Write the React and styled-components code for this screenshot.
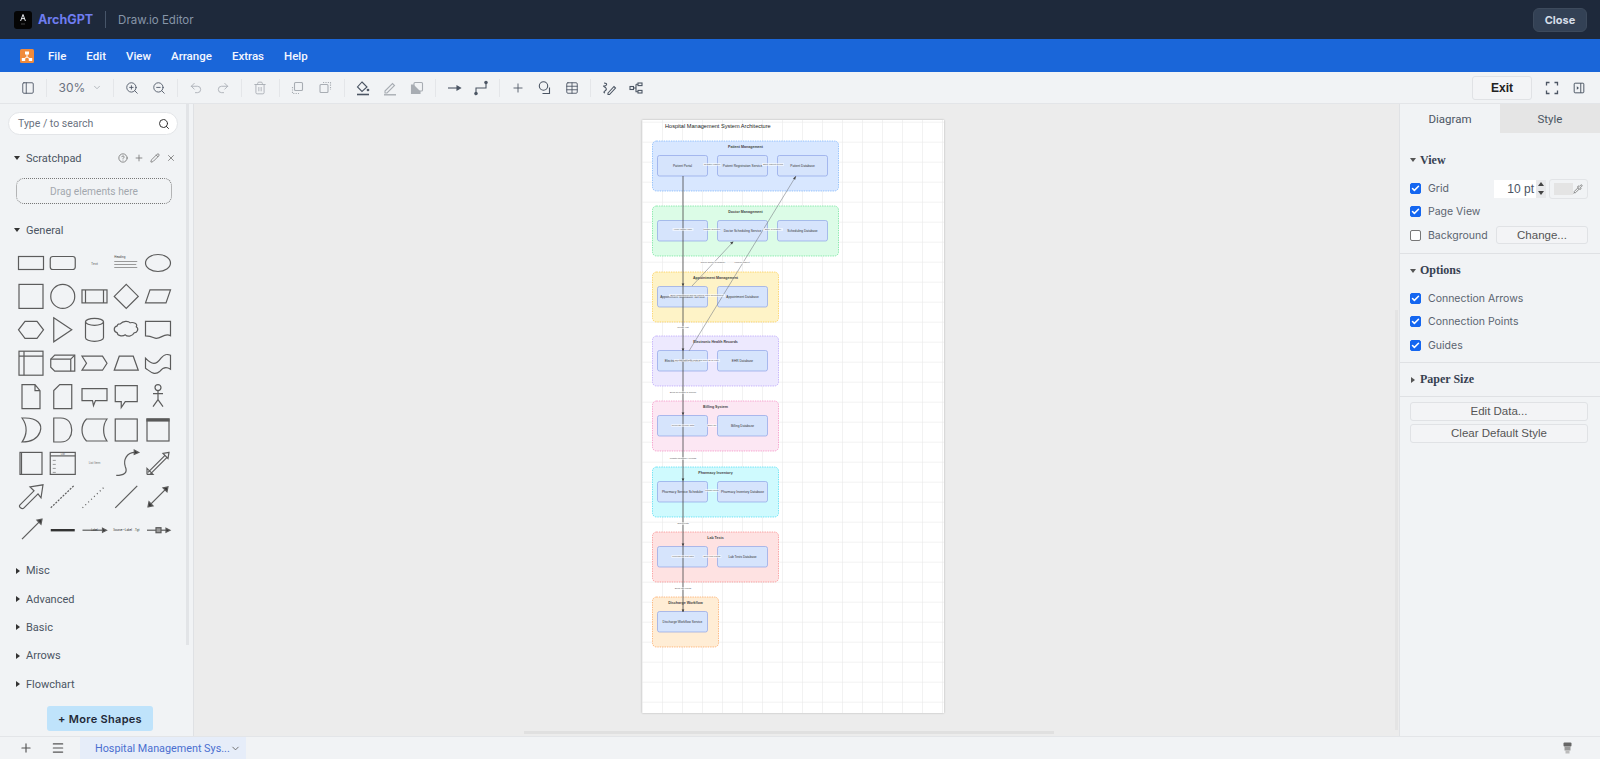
import React from "react";
import styled, { createGlobalStyle } from "styled-components";
import {
  PanelLeft, ChevronDown, ZoomIn, ZoomOut, Undo2, Redo2, Trash2, Plus, Table, Search,
  CircleHelp, Pencil, X, Menu, Check, Pipette,
} from "lucide-react";

const GlobalStyle = createGlobalStyle`
  html, body { margin: 0; padding: 0; height: 100%; overflow: hidden; }
  body { font-family: Roboto, "Liberation Sans", sans-serif; color: #374151; }
`;

const Page = styled.div`
  width: 1600px;
  height: 759px;
  display: flex;
  flex-direction: column;
  background: #f1f3f5;
`;

const Header = styled.header`
  height: 39px;
  flex: none;
  display: flex;
  align-items: center;
  padding: 0 14px;
  background: #1e293b;
`;

const Logo = styled.div`
  width: 18px;
  height: 18px;
  border-radius: 3px;
  background: #050505;
  display: flex;
  align-items: center;
  justify-content: center;
  margin-right: 6px;
`;

const Brand = styled.span`
  font: 700 12.5px Inter, sans-serif;
  color: #6f7df0;
`;

const HeaderDivider = styled.span`
  width: 1px;
  height: 17px;
  background: #475569;
  margin: 0 12px;
`;

const HeaderTitle = styled.span`
  font: 11.5px Inter, sans-serif;
  color: #8795a8;
  flex: 1;
`;

const CloseButton = styled.button`
  width: 54px;
  height: 24px;
  margin-right: -1px;
  border: 1px solid #3d4a5c;
  border-radius: 6px;
  background: #334155;
  color: #d5dde8;
  font: 700 11px Inter, sans-serif;
`;

const MenuBar = styled.nav`
  height: 33px;
  flex: none;
  display: flex;
  align-items: center;
  padding: 0 20px;
  background: #1a66d9;
`;

const MenuItem = styled.span`
  font-size: 11.5px;
  font-weight: 500;
  color: #f4f7ff;
  margin-left: ${(p) => p.$gap}px;
`;

const Toolbar = styled.div`
  height: 32px;
  flex: none;
  box-sizing: border-box;
  display: flex;
  align-items: center;
  background: #f1f3f5;
  border-bottom: 1px solid #e3e5e8;
`;

const ToolSlot = styled.span`
  width: ${(p) => p.$w || 27}px;
  height: 20px;
  flex: none;
  display: flex;
  align-items: center;
  justify-content: center;
  color: ${(p) => (p.$off ? "#a8adb3" : "#4b5563")};
`;

const ToolSep = styled.span`
  width: 1px;
  height: 18px;
  flex: none;
  margin: 0 ${(p) => p.$m || 4.5}px 0 ${(p) => p.$l || p.$m || 4.5}px;
  background: #e4e6e9;
`;

const ZoomValue = styled.span`
  font: 12px Inter, sans-serif;
  color: #6b7280;
  width: 40px;
  text-align: center;
`;

const ExitButton = styled.button`
  width: 60px;
  height: 24px;
  margin-left: auto;
  border: 1px solid #e0e2e5;
  border-radius: 3px;
  background: #f3f4f6;
  color: #222;
  font: 700 12px "Liberation Sans", sans-serif;
`;

const Body = styled.div`
  flex: 1;
  min-height: 0;
  display: flex;
`;

const Sidebar = styled.aside`
  width: 194px;
  flex: none;
  position: relative;
  box-sizing: border-box;
  padding: 8px 0 0 8px;
  background: #f1f3f5;
  border-right: 1px solid #dfe1e4;
`;

const ScrollThumb = styled.div`
  position: absolute;
  top: 0;
  right: 4px;
  width: 3px;
  height: 541px;
  background: #e2e4e7;
`;

const SearchBox = styled.div`
  width: 170px;
  height: 23px;
  box-sizing: border-box;
  padding: 0 7px 0 9px;
  display: flex;
  align-items: center;
  justify-content: space-between;
  border: 1px solid #e3e5e8;
  border-radius: 12px;
  background: #fff;
  font-size: 10.5px;
  color: #6b7280;
`;

const SectionRow = styled.div`
  height: ${(p) => p.$h || 28.4}px;
  margin-top: ${(p) => p.$top || 0}px;
  display: flex;
  align-items: center;
  font-size: 11px;
  color: #4b5563;
`;

const Caret = styled.i`
  width: 0;
  height: 0;
  flex: none;
  margin: 0 6px 0 ${(p) => (p.$open ? 6 : 8)}px;
  ${(p) =>
    p.$open
      ? "border-left: 3px solid transparent; border-right: 3px solid transparent; border-top: 4px solid #333;"
      : "border-top: 3px solid transparent; border-bottom: 3px solid transparent; border-left: 4px solid #333;"}
`;

const PadTools = styled.div`
  margin-left: auto;
  margin-right: 17px;
  display: flex;
  gap: 6px;
  color: #777;
`;

const DropZone = styled.div`
  width: 156px;
  height: 26px;
  margin: 9px 0 15px 8px;
  box-sizing: border-box;
  display: flex;
  align-items: center;
  justify-content: center;
  border: 1.5px dotted #777;
  border-radius: 8px;
  font-size: 10.2px;
  color: #a3a8ae;
`;

const ShapeGrid = styled.div`
  width: 160px;
  height: 300px;
  margin: 6px 0 9.5px 8px;
`;

const MoreShapes = styled.button`
  position: absolute;
  left: 47px;
  top: 602px;
  width: 106px;
  height: 25px;
  border: 0;
  border-radius: 3px;
  background: #bfe3fb;
  color: #1f2937;
  font: 600 11px Inter, sans-serif;
  letter-spacing: 0.3px;
`;

const Canvas = styled.main`
  flex: 1;
  position: relative;
  background: #ececec;
  overflow: hidden;
`;

const CanvasScrollX = styled.div`
  position: absolute;
  left: 330px;
  bottom: 2px;
  width: 530px;
  height: 3px;
  background: #e0e0e0;
`;

const CanvasScrollY = styled.div`
  position: absolute;
  right: 1px;
  top: 206px;
  width: 3px;
  height: 420px;
  background: #e4e4e4;
`;

const DiagramPage = styled.svg`
  position: absolute;
  left: 448px;
  top: 16px;
  background: #fff;
  box-shadow: 0 0 2px rgba(0, 0, 0, 0.25);
`;

const RightPanel = styled.aside`
  width: 201px;
  flex: none;
  background: #f1f3f5;
  border-left: 1px solid #e0e2e5;
  box-sizing: border-box;
`;

const Tabs = styled.div`
  height: 29px;
  display: flex;
`;

const Tab = styled.div`
  flex: 1;
  display: flex;
  align-items: center;
  justify-content: center;
  font-size: 11.5px;
  color: #4b5563;
  background: ${(p) => (p.$active ? "#f1f3f5" : "#e5e5e5")};
`;

const PanelSection = styled.section`
  padding: ${(p) => p.$pad};
  border-bottom: ${(p) => (p.$line ? "1px solid #dfe1e4" : "0")};
`;

const PanelHead = styled.div`
  height: 20px;
  margin-bottom: ${(p) => p.$after || 0}px;
  display: flex;
  align-items: center;
  gap: 3px;
  font-family: "Liberation Serif", serif;
  font-size: 12px;
  font-weight: 700;
  color: #374151;
`;

const HeadCaret = styled.i`
  width: 0;
  height: 0;
  ${(p) =>
    p.$open
      ? "border-left: 3px solid transparent; border-right: 3px solid transparent; border-top: 4px solid #555; margin-right: 1px;"
      : "border-top: 3px solid transparent; border-bottom: 3px solid transparent; border-left: 4px solid #555; margin: 0 2px 0 1px;"}
`;

const CheckRow = styled.div`
  height: 23.3px;
  display: flex;
  align-items: center;
  font: 10.5px Inter, sans-serif;
  color: #5b6470;
`;

const Box = styled.span`
  width: 11px;
  height: 11px;
  flex: none;
  margin-right: 7px;
  box-sizing: border-box;
  border-radius: 2px;
  display: flex;
  align-items: center;
  justify-content: center;
  color: #fff;
  background: ${(p) => (p.$on ? "#1466f0" : "#fff")};
  border: 1px solid ${(p) => (p.$on ? "#1466f0" : "#777")};
`;

const RowRight = styled.div`
  margin-left: auto;
  display: flex;
  align-items: center;
`;

const PtInput = styled.span`
  width: 42px;
  height: 18px;
  box-sizing: border-box;
  padding-right: 2px;
  text-align: right;
  line-height: 18px;
  background: #fff;
  font: 12px/18px "Liberation Sans", sans-serif;
  color: #4b5563;
`;

const Spinner = styled.span`
  width: 10px;
  height: 18px;
  margin-right: 3px;
  display: flex;
  flex-direction: column;
  align-items: center;
  justify-content: space-around;
  background: #e8e9eb;
  &::before {
    content: "";
    border-left: 3px solid transparent;
    border-right: 3px solid transparent;
    border-bottom: 4px solid #444;
  }
  &::after {
    content: "";
    border-left: 3px solid transparent;
    border-right: 3px solid transparent;
    border-top: 4px solid #444;
  }
`;

const ColorButton = styled.span`
  width: 39px;
  height: 20px;
  box-sizing: border-box;
  padding: 0 4px;
  display: flex;
  align-items: center;
  justify-content: space-between;
  border: 1px solid #e2e4e7;
  border-radius: 3px;
  color: #777;
  &::before {
    content: "";
    width: 19px;
    height: 12px;
    background: #e4e4e4;
  }
`;

const PanelButton = styled.button`
  display: block;
  width: ${(p) => p.$w || 178}px;
  height: ${(p) => p.$h || 19}px;
  padding: 0;
  margin: ${(p) => p.$m || "0"};
  border: 1px solid #e0e2e5;
  border-radius: 3px;
  background: #f3f4f6;
  font: 11.5px "Liberation Sans", sans-serif;
  color: #555;
`;

const Footer = styled.footer`
  height: 23px;
  flex: none;
  display: flex;
  align-items: center;
  background: #f1f3f5;
  border-top: 1px solid #e3e5e8;
  box-sizing: border-box;
`;

const FooterIcon = styled.span`
  width: 32px;
  margin-left: ${(p) => p.$left || 0}px;
  display: flex;
  justify-content: center;
  color: #555;
`;

const SheetTab = styled.div`
  width: 166px;
  height: 100%;
  margin-left: 6px;
  box-sizing: border-box;
  padding: 0 8px 0 15px;
  display: flex;
  align-items: center;
  justify-content: space-between;
  white-space: nowrap;
  background: #e6edf9;
  color: #4a6fd0;
  font-size: 10.8px;
  & > svg {
    flex: none;
  }
`;

const Robot = styled.svg`
  margin-left: auto;
  margin-right: 27px;
`;

const stroke = { fill: "none", stroke: "#5c5c5c", strokeWidth: 1.2 };

// sidebar stencil, one entry per cell, drawn around the cell centre
const stencils = [
  <rect x="-12.5" y="-6.5" width="25" height="13" />,
  <rect x="-12.5" y="-6.5" width="25" height="13" rx="2.5" />,
  <text x="0" y="2" fontSize="3.6" textAnchor="middle" fill="#666" stroke="none">Text</text>,
  <g stroke="none" fill="#999"><text x="-12" y="-5" fontSize="3" fill="#444">Heading</text><rect x="-12" y="-2" width="23" height="1" /><rect x="-12" y="1" width="22" height="1" /><rect x="-12" y="4" width="23" height="1" /></g>,
  <ellipse cx="0" cy="0" rx="12.5" ry="8.5" />,
  <rect x="-12" y="-12" width="24" height="24" />,
  <circle cx="0" cy="0" r="12" />,
  <g><rect x="-12.5" y="-6.5" width="25" height="13" /><path d="M-9-6.5v13M9-6.5v13" /></g>,
  <path d="M0-12 12 0 0 12-12 0Z" />,
  <path d="M-8-6.5H12.5L8 6.5H-12.5Z" />,
  <path d="M-6-8.5H6L12.5 0 6 8.5H-6L-12.5 0Z" />,
  <path d="M-9-12 9 0-9 12Z" />,
  <g><ellipse cx="0" cy="-8" rx="9" ry="3.5" /><path d="M-9-8V8A9 3.5 0 0 0 9 8V-8" /></g>,
  <path d="M-6-6C-3-9 2-9 4-7 7-8 12-6 10-3 13-1 11 3 8 3 6 7 1 7-1 5-4 7-9 6-9 3-13 2-13-3-9-4-9-6-7-6-6-6Z" />,
  <path d="M-12.5-8.5H12.5V6C6 2 2 11-4 8-7 6.5-10 6-12.5 6Z" />,
  <g><rect x="-12" y="-12" width="24" height="24" /><path d="M-7-12V12M-12-7H12" /></g>,
  <g><path d="M-12-4-8-8H12V8H-8L-12 4Z" /><path d="M-12-4H8V8M8-4 12-8" /></g>,
  <path d="M-12.5-7H8L12.5 0 8 7H-12.5L-8 0Z" />,
  <path d="M-7-7H7L12 7H-12Z" />,
  <path d="M-12.5-5C-6 2-2 2 3-5 7-10 10-9 12.5-8V6C8 3 5 4 2 8-4 13-8 8-12.5 5Z" />,
  <path d="M-9-12H4L9-6V12H-9ZM4-12V-6H9" />,
  <path d="M-3-12H9V12H-9V-6Z" />,
  <path d="M-12.5-8H12.5V4H1L-1 9-2 4H-12.5Z" />,
  <path d="M-11-11H11V5H-1L-5 11V5H-11Z" />,
  <g><circle cx="0" cy="-9" r="3" /><path d="M0-6V3M-5-3H5M0 3-5 10M0 3 5 10" /></g>,
  <path d="M-9-12H-6C6-12 12-6 9 2 6 10-2 12-9 12-4 5-3-4-9-12Z" />,
  <path d="M-9-12H-2C6-12 9-6 9 0 9 6 6 12-2 12H-9Z" />,
  <path d="M-8-11H12.5C8-5 8 5 12.5 11H-8C-14 5-14-5-8-11Z" />,
  <rect x="-11" y="-11" width="22" height="22" />,
  <g><rect x="-11" y="-11" width="22" height="22" /><rect x="-11" y="-11" width="22" height="2" fill="#555" /></g>,
  <g><rect x="-11" y="-11" width="22" height="22" /><path d="M-9.5-11V11" /></g>,
  <g><rect x="-12.5" y="-11" width="25" height="22" /><path d="M-12.5-7.5H12.5" /><path d="M-10-3H-7M-10 1H-7M-10 5H-7M-10 9H-7" strokeWidth=".6" /><text x="0" y="-8.2" fontSize="2.6" textAnchor="middle" stroke="none" fill="#666">List</text></g>,
  <text x="0" y="1" fontSize="3" textAnchor="middle" fill="#777" stroke="none">List Item</text>,
  <g><path d="M-10 12C-3 12 2 10-1 3-3-3 0-11 9-11" /><path d="M8-13.5 12.5-11 8-9Z" fill="#333" /></g>,
  <path d="M-10 9 7-8M-8 11 9-6M-11 11-11 5-7 9M-11 11-5 11-9 7M11-11 5-10 10-5Z" />,
  <path d="M-11 8 3-6-1-10 12-12 10 1 7-3-7 11C-9 13-13 10-11 8Z" />,
  <path d="M-12 11 11-11" strokeDasharray="2 1.3" />,
  <path d="M-12 11 11-11" strokeDasharray="1 3" />,
  <path d="M-11 11 11-11" />,
  <g><path d="M-8 8 8-8" /><path d="M10-10 5-9 9-5ZM-10 10-5 9-9 5Z" fill="#333" /></g>,
  <g><path d="M-9 9 9-9" /><path d="M11-11 6-10 10-6Z" fill="#333" /></g>,
  <path d="M-12 0H12" strokeWidth="2.4" stroke="#333" />,
  <g><path d="M-12 0H10" /><path d="M12 0 8-2V2Z" fill="#333" /><text x="0" y="1" fontSize="2.6" textAnchor="middle" stroke="none" fill="#333">Label</text></g>,
  <text x="0" y="1" fontSize="3" textAnchor="middle" fill="#333" stroke="none">Source—Label→Tgt</text>,
  <g><path d="M-11 0H10" /><path d="M12 0 8-2V2Z" fill="#333" /><rect x="-2" y="-2.5" width="5" height="5" fill="#999" /></g>,
];

const Stencil = () => (
  <ShapeGrid>
    <svg width="160" height="300" viewBox="0 0 160 300">
      <g {...stroke}>
        {stencils.map((shape, i) => (
          <g key={i} transform={`translate(${15 + (i % 5) * 31.75} ${16 + Math.floor(i / 5) * 33.4})`}>
            {shape}
          </g>
        ))}
      </g>
    </svg>
  </ShapeGrid>
);

// diagram coordinates are relative to the page, whose corner is at 642,120 in the window
const groups = [
  { name: "Patient Management", y: 21, w: 186, fill: "#d8e7ff", line: "#60a5fa" },
  { name: "Doctor Management", y: 86, w: 186, fill: "#dcfce7", line: "#4ade80" },
  { name: "Appointment Management", y: 152, w: 126, fill: "#fef3c7", line: "#fbbf24" },
  { name: "Electronic Health Records", y: 216, w: 126, fill: "#ede9fe", line: "#a78bfa" },
  { name: "Billing System", y: 281, w: 126, fill: "#fce7f3", line: "#f472b6" },
  { name: "Pharmacy Inventory", y: 347, w: 126, fill: "#cffafe", line: "#22d3ee" },
  { name: "Lab Tests", y: 412, w: 126, fill: "#fee2e2", line: "#f87171" },
  { name: "Discharge Workflow", y: 477, w: 66, fill: "#ffedd5", line: "#fb923c" },
];

const nodes = [
  ["Patient Portal", 0, 0], ["Patient Registration Service", 1, 0], ["Patient Database", 2, 0],
  ["", 0, 1], ["Doctor Scheduling Service", 1, 1], ["Scheduling Database", 2, 1],
  ["Appointment Scheduler Service", 0, 2], ["Appointment Database", 1, 2],
  ["Electronic Health Service", 0, 3], ["EHR Database", 1, 3],
  ["", 0, 4], ["Billing Database", 1, 4],
  ["Pharmacy Service Scheduler", 0, 5], ["Pharmacy Inventory Database", 1, 5],
  ["", 0, 6], ["Lab Tests Database", 1, 6],
  ["Discharge Workflow Service", 0, 7],
];

// edge captions: x, y, text, with a pale strip behind them
const edgeLabels = [
  [70, 45, "Register patient"], [131, 45, "Store patient record"],
  [41, 110, "Verify doctor login"], [70, 110, "Update schedule"], [131, 110, "Store availability"],
  [71, 143, "Check doctor availability"], [100, 143, "Lookup patient"],
  [55, 176, "Book appointment slot for patient, save appointment"],
  [41, 208, "Create visit"],
  [55, 241, "Record visit data, read and save EHR entry"],
  [41, 273, "Send bill details to finance"],
  [41, 306, "Generate invoice data"], [70, 306, "Save bill"],
  [41, 339, "Update pharmacy records"],
  [70, 371, "Update stock"],
  [41, 404, "Order tests"],
  [41, 437, "Process lab test data"], [70, 437, "Save test results"],
  [41, 469, "Send lab results"],
];

const Diagram = () => (
  <DiagramPage width="302" height="593" viewBox="0 0 302 593">
    <defs>
      <pattern id="grid" x="0" y="1.7" width="20" height="20" patternUnits="userSpaceOnUse">
        <path d="M20 0H0V20" fill="none" stroke="#e6e6e6" strokeWidth="1" />
      </pattern>
    </defs>
    <rect width="302" height="593" fill="url(#grid)" />
    <text x="23" y="8" fontSize="5.6" fill="#222" fontFamily="Liberation Sans">Hospital Management System Architecture</text>
    {groups.map((g) => (
      <g key={g.name}>
        <rect x="10.5" y={g.y} width={g.w} height="50" rx="4" fill={g.fill} stroke={g.line} strokeWidth="0.6" strokeDasharray="1.4 1" />
        <text x={10.5 + g.w / 2} y={g.y + 6.5} fontSize="3.6" fontWeight="700" textAnchor="middle" fill="#444" fontFamily="Liberation Sans">{g.name}</text>
      </g>
    ))}
    {nodes.map(([label, col, row], i) => {
      const x = 15.5 + col * 60;
      const y = groups[row].y + 14.5;
      return (
        <g key={i}>
          <rect x={x} y={y} width="50" height="20.5" rx="2" fill="#d6e4fc" stroke="#8ea4e6" strokeWidth="0.7" />
          <text x={x + 25} y={y + 11.5} fontSize="3.2" textAnchor="middle" fill="#333" fontFamily="Liberation Sans">{label}</text>
        </g>
      );
    })}
    <path d="M41 56V492" stroke="#444" strokeWidth="0.8" fill="none" />
    <path d="M50 166 91 122M47 231 154 56" stroke="#7a7f86" strokeWidth="0.6" fill="none" />
    <path d="M91.5 121.5l-3.5 1 2 2ZM154 56l-3 2.5 2.2 1.3Z" fill="#444" />
    {[166, 231, 295, 361, 426, 492].map((y) => (
      <path key={y} d={`M41 ${y}l-1.3-2.6h2.6Z`} fill="#333" />
    ))}
    {edgeLabels.map(([x, y, t]) => (
      <g key={t + y}>
        <rect x={x - t.length * 0.55} y={y - 1.8} width={t.length * 1.1} height="2.6" fill="#fff" opacity="0.7" />
        <text x={x} y={y} fontSize="2.3" textAnchor="middle" fill="#555" fontFamily="Liberation Sans">{t}</text>
      </g>
    ))}
  </DiagramPage>
);

const Tool = ({ icon: Icon, w, off, size = 14 }) => (
  <ToolSlot $w={w} $off={off}>
    <Icon size={size} strokeWidth={1.5} />
  </ToolSlot>
);

const Glyph = ({ children, w, off }) => (
  <ToolSlot $w={w} $off={off}>
    <svg width="16" height="16" viewBox="0 0 16 16" fill="none" stroke="currentColor" strokeWidth="1.1">
      {children}
    </svg>
  </ToolSlot>
);

const Tick = () => <Check size={9} strokeWidth={4} />;

export default function App() {
  return (
    <Page>
      <GlobalStyle />
      <Header>
        <Logo>
          <svg width="10" height="13" viewBox="0 0 10 13" fill="none" stroke="#e5e7eb">
            <path d="M5 1.5 2.6 8M5 1.5 7.4 8M3.6 5.6H6.4" strokeWidth="1" />
            <path d="M3 11H7" strokeWidth=".5" stroke="#888" />
          </svg>
        </Logo>
        <Brand>ArchGPT</Brand>
        <HeaderDivider />
        <HeaderTitle>Draw.io Editor</HeaderTitle>
        <CloseButton>Close</CloseButton>
      </Header>
      <MenuBar>
        <svg width="14" height="14" viewBox="0 0 14 14">
          <rect width="14" height="14" rx="1.5" fill="#f08a3c" />
          <path d="M7 5V8M7 8 3.5 10M7 8 10.5 10" stroke="#fff" strokeWidth="1" />
          <rect x="5" y="2.5" width="4" height="3" fill="#fff" />
          <rect x="1.8" y="9" width="3.4" height="3" fill="#fff" />
          <rect x="8.8" y="9" width="3.4" height="3" fill="#fff" />
        </svg>
        <MenuItem $gap={14}>File</MenuItem>
        <MenuItem $gap={20}>Edit</MenuItem>
        <MenuItem $gap={20}>View</MenuItem>
        <MenuItem $gap={20}>Arrange</MenuItem>
        <MenuItem $gap={20}>Extras</MenuItem>
        <MenuItem $gap={20}>Help</MenuItem>
      </MenuBar>
      <Toolbar>
        <ToolSlot $w={14} />
        <Tool icon={PanelLeft} />
        <ToolSep $m={5} />
        <ZoomValue>30%</ZoomValue>
        <ToolSlot $w={10} $off><ChevronDown size={11} /></ToolSlot>
        <ToolSep $l={11} />
        <Tool icon={ZoomIn} />
        <Tool icon={ZoomOut} />
        <ToolSep />
        <Tool icon={Undo2} off />
        <Tool icon={Redo2} off />
        <ToolSep />
        <Tool icon={Trash2} off />
        <ToolSep $m={5} />
        <Glyph off><rect x="4.5" y="2.5" width="8" height="8" rx="1" /><path d="M2.5 7v6.5H9" strokeDasharray="1.2 1.2" /></Glyph>
        <Glyph off><rect x="3" y="4.5" width="8" height="8" rx="1" /><path d="M6 2.5H13.5V10" strokeDasharray="1.2 1.2" /></Glyph>
        <ToolSep $m={5} />
        <Glyph><path d="M7 2 12 7 7 11.5 2.5 7Z" /><path d="M2 14.5H14" strokeWidth="1.6" /><circle cx="13" cy="10" r=".8" fill="currentColor" /></Glyph>
        <Glyph off><path d="M3 11 10.5 3.5 12.5 5.5 5 13H3Z" /><path d="M2 14.8H14" strokeWidth="1.4" /></Glyph>
        <Glyph off><rect x="5" y="2.5" width="8.5" height="8.5" rx="1" /><path d="M5 5H2.5V13.5H11V11" fill="#a8adb3" /></Glyph>
        <ToolSep />
        <Glyph><path d="M2 8H12" /><path d="M14.5 8 11 6V10Z" fill="currentColor" /></Glyph>
        <Glyph><path d="M3 13.5V8H13V2.5" /><circle cx="3" cy="13.5" r="1.2" fill="currentColor" /><circle cx="13" cy="2.5" r="1.2" fill="currentColor" /></Glyph>
        <ToolSep />
        <Tool icon={Plus} />
        <Glyph><circle cx="6.5" cy="6" r="4.2" /><path d="M12.5 7.5V13.5H5.5" /></Glyph>
        <Tool icon={Table} />
        <ToolSep />
        <Glyph><path d="M3 3C7 3 6 6 3 6 1 6 7 8 5 10S2 12 4 13" /><path d="M7 13 13 6.5 14.5 8 8.5 14.5H7Z" /></Glyph>
        <Glyph><rect x="2" y="6.5" width="3.5" height="3" /><rect x="10" y="3" width="4" height="2.6" /><rect x="10" y="10.4" width="4" height="2.6" /><path d="M5.5 8H8M8 4.3V11.7H10M8 4.3H10" /></Glyph>
        <ExitButton>Exit</ExitButton>
        <Glyph w={40}><path d="M2.5 5.5V2.5H5.5M10.5 2.5H13.5V5.5M13.5 10.5V13.5H10.5M5.5 13.5H2.5V10.5" strokeWidth="1.3" /></Glyph>
        <Glyph w={14}><rect x="2.5" y="2.5" width="11" height="11" rx="1" /><path d="M10 2.5V13.5" /><path d="M5.5 6 8 8 5.5 10Z" fill="currentColor" stroke="none" /></Glyph>
        <ToolSlot $w={14} />
      </Toolbar>
      <Body>
        <Sidebar>
          <ScrollThumb />
          <SearchBox>
            <span>Type / to search</span>
            <Search size={12} color="#333" />
          </SearchBox>
          <SectionRow $h={22} $top={12}>
            <Caret $open />
            Scratchpad
            <PadTools>
              <CircleHelp size={10} />
              <Plus size={10} />
              <Pencil size={10} />
              <X size={10} />
            </PadTools>
          </SectionRow>
          <DropZone>Drag elements here</DropZone>
          <SectionRow $h={22}>
            <Caret $open />
            General
          </SectionRow>
          <Stencil />
          <SectionRow><Caret />Misc</SectionRow>
          <SectionRow><Caret />Advanced</SectionRow>
          <SectionRow><Caret />Basic</SectionRow>
          <SectionRow><Caret />Arrows</SectionRow>
          <SectionRow><Caret />Flowchart</SectionRow>
          <MoreShapes>+ More Shapes</MoreShapes>
        </Sidebar>
        <Canvas>
          <Diagram />
          <CanvasScrollX />
          <CanvasScrollY />
        </Canvas>
        <RightPanel>
          <Tabs>
            <Tab $active>Diagram</Tab>
            <Tab>Style</Tab>
          </Tabs>
          <PanelSection $pad="17px 12px 6px 10px" $line>
            <PanelHead $after={7}><HeadCaret $open />View</PanelHead>
            <CheckRow>
              <Box $on><Tick /></Box>Grid
              <RowRight>
                <PtInput>10 pt</PtInput>
                <Spinner />
                <ColorButton><Pipette size={10} /></ColorButton>
              </RowRight>
            </CheckRow>
            <CheckRow><Box $on><Tick /></Box>Page View</CheckRow>
            <CheckRow>
              <Box />Background
              <RowRight><PanelButton $w={92} $h={18}>Change...</PanelButton></RowRight>
            </CheckRow>
          </PanelSection>
          <PanelSection $pad="7px 12px 5px 10px" $line>
            <PanelHead $after={6}><HeadCaret $open />Options</PanelHead>
            <CheckRow><Box $on><Tick /></Box>Connection Arrows</CheckRow>
            <CheckRow><Box $on><Tick /></Box>Connection Points</CheckRow>
            <CheckRow><Box $on><Tick /></Box>Guides</CheckRow>
          </PanelSection>
          <PanelSection $pad="7px 12px 6px 10px" $line>
            <PanelHead><HeadCaret />Paper Size</PanelHead>
          </PanelSection>
          <PanelSection $pad="5px 12px 0 10px">
            <PanelButton $m="0 0 3px">Edit Data...</PanelButton>
            <PanelButton>Clear Default Style</PanelButton>
          </PanelSection>
        </RightPanel>
      </Body>
      <Footer>
        <FooterIcon $left={10}><Plus size={14} /></FooterIcon>
        <FooterIcon><Menu size={14} /></FooterIcon>
        <SheetTab>
          Hospital Management Sys...
          <ChevronDown size={11} color="#666" />
        </SheetTab>
        <Robot width="11" height="14" viewBox="0 0 11 14">
          <rect x="1.5" y="1.5" width="8" height="4" rx="1" fill="#666" />
          <rect x="2.5" y="5.5" width="6" height="4" fill="#999" />
          <rect x="3.5" y="9.5" width="4" height="3" fill="#bbb" />
        </Robot>
      </Footer>
    </Page>
  );
}
